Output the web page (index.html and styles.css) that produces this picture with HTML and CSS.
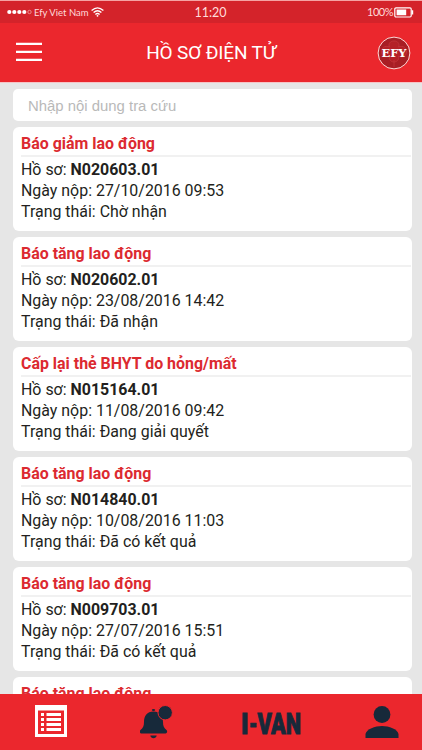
FILE: index.html
```html
<!DOCTYPE html>
<html lang="vi">
<head>
<meta charset="UTF-8" />
<meta name="viewport" content="width=device-width, initial-scale=1" />
<title>Hồ sơ điện tử</title>
<link rel="stylesheet" href="styles.css">
</head>
<body>
<div class="app">
  <div class="status">
    <div class="carrier">
      <svg width="25" height="6" viewBox="0 0 25 6" fill="#fff">
        <circle cx="2.3" cy="3" r="2.1" /><circle cx="7.3" cy="3" r="2.1" />
        <circle cx="12.3" cy="3" r="2.1" /><circle cx="17.3" cy="3" r="2.1" />
        <circle cx="22.5" cy="3" r="1.7" fill="none" stroke="#f7b5b5" stroke-width=".7" />
      </svg>
      <span class="carrier-name">Efy Viet Nam</span>
      <svg width="13" height="10" viewBox="0 0 13 10" fill="none" stroke="#fff" stroke-width="1.3">
        <path d="M.6 3.6Q6.5-1.9 12.4 3.6M2.6 5.6Q6.5 2 10.4 5.6M4.4 7.5Q6.5 5.6 8.6 7.5" />
        <circle cx="6.5" cy="8.8" r=".9" fill="#fff" stroke="none" />
      </svg>
    </div>
    <div class="clock">11:20</div>
    <div class="battery">
      <span>100%</span>
      <svg width="20" height="11" viewBox="0 0 20 11">
        <rect x=".8" y=".8" width="16.4" height="9.2" rx="1.2" fill="none" stroke="#fff" stroke-width="1.2" />
        <path d="M2.6 2.6h9.6v5.6H2.6zM17.6 3.3h1.6v4.2h-1.6z" fill="#fff" />
      </svg>
    </div>
  </div>

  <header>
    <svg class="menu" width="26" height="20" viewBox="0 0 26 20">
      <path d="M0 1.8h26M0 9.8h26M0 17.8h26" stroke="#fff" stroke-width="2.2" />
    </svg>
    <h1>HỒ SƠ ĐIỆN TỬ</h1>
    <svg class="logo" width="34" height="34" viewBox="0 0 34 34">
      <circle cx="17" cy="17" r="15.9" fill="#a81e24" stroke="#ffd9d7" stroke-width="1" />
      <path d="M17 5c4 0 6 3 4.500 6 5-2 8 1 8 5s-4 6-8 4c1 4-2 6-4.500 6s-5.500-2-4.500-6c-4 2-8 0-8-4s3-7 8-5C11 8 13 5 17 5zM17 24v7" fill="#b42127" stroke="#c4383d" stroke-width=".7" />
      <text x="4.500" y="21.300" textLength="25" lengthAdjust="spacingAndGlyphs">EFY</text>
    </svg>
  </header>

  <main>
    <input class="search" type="text" placeholder="Nhập nội dung tra cứu" />
    <div class="card">
      <h2>Báo giảm lao động</h2>
      <p>Hồ sơ: <b>N020603.01</b></p>
      <p>Ngày nộp: 27/10/2016 09:53</p>
      <p>Trạng thái: Chờ nhận</p>
    </div>
    <div class="card">
      <h2>Báo tăng lao động</h2>
      <p>Hồ sơ: <b>N020602.01</b></p>
      <p>Ngày nộp: 23/08/2016 14:42</p>
      <p>Trạng thái: Đã nhận</p>
    </div>
    <div class="card">
      <h2>Cấp lại thẻ BHYT do hỏng/mất</h2>
      <p>Hồ sơ: <b>N015164.01</b></p>
      <p>Ngày nộp: 11/08/2016 09:42</p>
      <p>Trạng thái: Đang giải quyết</p>
    </div>
    <div class="card">
      <h2>Báo tăng lao động</h2>
      <p>Hồ sơ: <b>N014840.01</b></p>
      <p>Ngày nộp: 10/08/2016 11:03</p>
      <p>Trạng thái: Đã có kết quả</p>
    </div>
    <div class="card">
      <h2>Báo tăng lao động</h2>
      <p>Hồ sơ: <b>N009703.01</b></p>
      <p>Ngày nộp: 27/07/2016 15:51</p>
      <p>Trạng thái: Đã có kết quả</p>
    </div>
    <div class="card">
      <h2>Báo tăng lao động</h2>
    </div>
  </main>

  <nav>
    <svg width="32" height="32" viewBox="0 0 32 32">
      <path d="M0 0h32v32H0z" fill="#fff" />
      <path d="M3 5.500h26v23.500H3z" fill="#eb272d" />
      <path d="M6 8h3v3H6zM11.500 8H26v3H11.500zM6 13h3v3H6zM11.500 13H26v3H11.500zM6 18h3v3H6zM11.500 18H26v3H11.500zM6 23h3v3H6zM11.500 23H26v3H11.500z" fill="#fff" />
    </svg>
    <svg class="bell" width="34" height="36" viewBox="0 0 34 36" fill="#17293a">
      <ellipse cx="13.500" cy="5" rx="1.700" ry="1" />
      <path d="M13.500 6.500c6.500 0 9.500 4.200 9.500 10.500 0 4 1 6 3.500 8 1.100 1 .8 3.500-1 3.500h-24c-1.800 0-2.100-2.500-1-3.500 2.500-2 3.500-4 3.500-8 0-6.300 3-10.500 9.500-10.500zM10.300 30.500h6.400c-.5 3.700-5.900 3.700-6.400 0z" />
      <circle cx="25.200" cy="7.700" r="7.200" stroke="#eb272d" stroke-width="1" />
    </svg>
    <svg class="ivan" width="60" height="36" viewBox="0 0 60 36">
      <text y="29"><tspan x="-1" textLength="7.500" lengthAdjust="spacingAndGlyphs">I</tspan><tspan x="7" textLength="8.500" lengthAdjust="spacingAndGlyphs">-</tspan><tspan x="15.500" textLength="43.500" lengthAdjust="spacingAndGlyphs">VAN</tspan></text>
    </svg>
    <svg width="34" height="34" viewBox="0 0 34 34" fill="#17293a">
      <circle cx="17" cy="9.500" r="8.400" />
      <path d="M.5 33v-4C1.500 24 10 21 17 21s15.500 3 16.500 8v4z" />
    </svg>
  </nav>
</div>
</body>
</html>
```
FILE: styles.css
```css
* { box-sizing: border-box; }

body {
  margin: 0;
  background: #e6e6e6;
  color: #231f20;
  font-family: Roboto, "Liberation Sans", sans-serif;
}
.app {
  display: flex; flex-direction: column;
  height: 750px; overflow: hidden;
}
svg { display: block; flex: none; }

/* Thanh trạng thái */
.status {
  display: grid; grid-template-columns: 1fr auto 1fr; align-items: center;
  flex: none; height: 23px; padding: 0 8px 0 7px;
  border-top: 1px solid #f5a3a3;
  background: #d4232a; color: #ffdcdb;
}
.carrier, .battery { display: flex; align-items: center; }
.carrier-name { width: 55px; margin: 0 2px; font: 9.500px Lato, sans-serif; white-space: nowrap; }
.clock { font: 12.500px Lato, sans-serif; }
.battery { justify-content: flex-end; font: 11px/12px Lato, sans-serif; letter-spacing: -.5px; }
.battery span { margin-top: -1px; }
.battery svg { margin-left: 1px; }

header {
  display: grid; grid-template-columns: 60px 1fr 60px; align-items: center;
  flex: none; height: 60px; padding: 0 11px 0 16px;
  background: #eb272d; color: #fff;
  border-bottom: 1px solid #f6c4c6;
}
.menu { margin-top: -2px; }
h1 {
  margin: -1px 5px 0 0; text-align: center;
  font-size: 19px; font-weight: 400; letter-spacing: -.15px; white-space: nowrap;
}
.logo { justify-self: end; }
.logo text { font: bold 11.500px "DejaVu Serif", serif; fill: #fff; }

main {
  flex: 1; min-height: 0; overflow: hidden;
  display: flex; flex-direction: column; gap: 6px;
  padding: 6px 10px 0 13px;
}
.search {
  flex: none; width: 100%; height: 32px; padding: 1px 15px 0;
  border: 0; border-radius: 5px; background: #fff;
  font: 14.900px "Liberation Sans", sans-serif;
}
.search::placeholder { color: #b9b9b9; opacity: 1; }

.card {
  flex: none; height: 104px; padding: 4px 1px 0 8px;
  border-radius: 6px; background: #fff;
}
.card h2 {
  height: 26px; margin: 0 0 2px;
  border-bottom: 2px solid #f1f1f1;
  color: #dc2a30; font-size: 15.930px; font-weight: 700; line-height: 26px;
}
.card p { margin: 0; font-size: 15.930px; line-height: 21px; }

/* Menu dưới */
nav {
  display: flex; align-items: flex-start;
  flex: none; height: 56px; padding: 11px 23px 0 35px;
  background: #eb272d;
}
.bell { margin-left: 73px; }
.ivan { margin: 0 63px 0 68px; overflow: visible; }
.ivan text {
  font: 900 30px Roboto, sans-serif;
  fill: #17293a; stroke: #17293a; stroke-width: 1px;
}
```
